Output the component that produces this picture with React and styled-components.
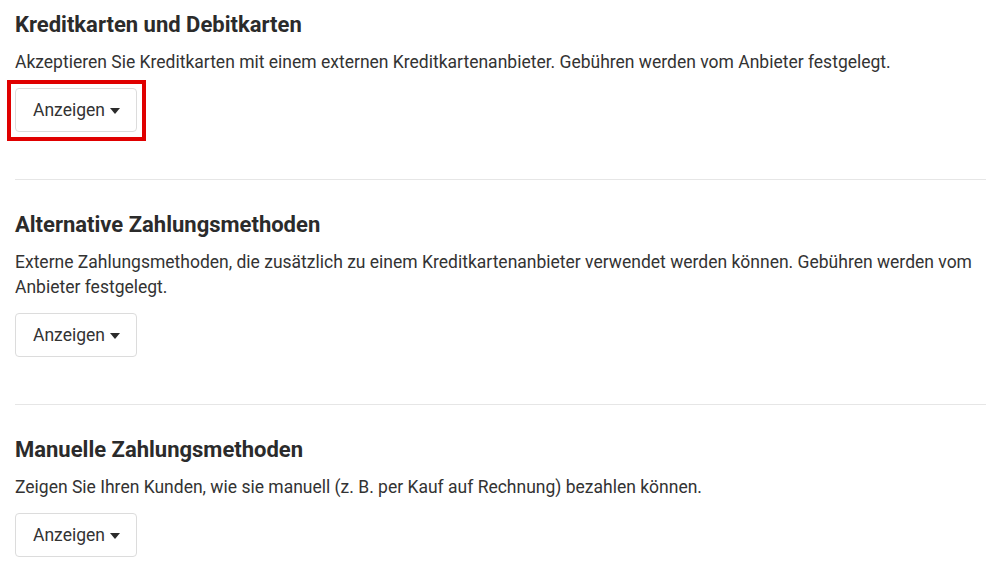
import React from 'react'
import styled, { createGlobalStyle } from 'styled-components'

const GlobalStyle = createGlobalStyle`
    body {
        margin: 0;
        background: #fff;
        font-family: Roboto, "Liberation Sans", Arial, sans-serif;
        color: #333;
    }
`
const Page = styled.div`
    padding: 0 8px 0 15px;
`
const Section = styled.section`
    padding: ${({ $first }) => ($first ? '12px' : '32px')} 0 ${({ $last }) => ($last ? '16px' : '47px')};
    border-bottom: ${({ $last }) => ($last ? 'none' : '1px solid #e6e6e6')};
`
const Title = styled.h2`
    margin: 0 0 12px;
    font-size: 22px;
    line-height: 26px;
    font-weight: 700;
    color: #2b2b2b;
`
const Description = styled.p`
    margin: 0 0 13px;
    font-size: 17.5px;
    line-height: 25px;
    color: #333;
`
const ToggleButton = styled.button`
    position: relative;
    display: inline-flex;
    align-items: center;
    gap: 5px;
    height: 44px;
    padding: 0 16px 0 17px;
    background: #fff;
    border: 1px solid #dcdcdc;
    border-radius: 4px;
    font-family: inherit;
    font-size: 17.5px;
    color: #333;
    cursor: pointer;

    &::after {
        content: '';
        display: ${({ $highlighted }) => ($highlighted ? 'block' : 'none')};
        position: absolute;
        top: -9px;
        left: -9px;
        right: -10px;
        bottom: -10px;
        border: 4px solid #e00000;
        pointer-events: none;
    }
`
const Caret = styled.span`
    width: 0;
    height: 0;
    margin-top: 2px;
    border-left: 5.5px solid transparent;
    border-right: 5.5px solid transparent;
    border-top: 6px solid #2b2b2b;
`

const sections = [
    {
        title: 'Kreditkarten und Debitkarten',
        text: 'Akzeptieren Sie Kreditkarten mit einem externen Kreditkartenanbieter. Gebühren werden vom Anbieter festgelegt.',
        highlighted: true,
    },
    {
        title: 'Alternative Zahlungsmethoden',
        text: 'Externe Zahlungsmethoden, die zusätzlich zu einem Kreditkartenanbieter verwendet werden können. Gebühren werden vom Anbieter festgelegt.',
    },
    {
        title: 'Manuelle Zahlungsmethoden',
        text: 'Zeigen Sie Ihren Kunden, wie sie manuell (z. B. per Kauf auf Rechnung) bezahlen können.',
    },
]

export default function App() {
    return (
        <>
            <GlobalStyle />
            <Page>
                {sections.map(({ title, text, highlighted }, index) => (
                    <Section key={index} $first={index === 0} $last={index === sections.length - 1}>
                        <Title>{title}</Title>
                        <Description>{text}</Description>
                        <ToggleButton $highlighted={highlighted}>
                            Anzeigen <Caret />
                        </ToggleButton>
                    </Section>
                ))}
            </Page>
        </>
    )
}
